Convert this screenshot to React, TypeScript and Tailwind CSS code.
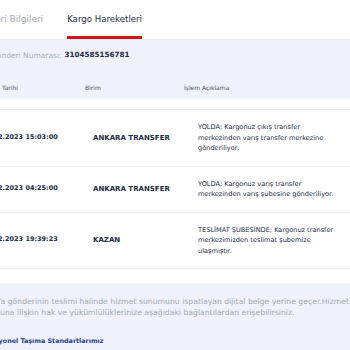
import { FunctionComponent } from "react";

interface Movement {
  date: string;
  unit: string;
  desc: string[];
}

const movements: Movement[] = [
  {
    date: "14.02.2023 15:03:00",
    unit: "ANKARA TRANSFER",
    desc: [
      "YOLDA; Kargonuz çıkış transfer",
      "merkezinden varış transfer merkezine",
      "gönderiliyor.",
    ],
  },
  {
    date: "15.02.2023 04:25:00",
    unit: "ANKARA TRANSFER",
    desc: [
      "YOLDA; Kargonuz varış transfer",
      "merkezinden varış şubesine gönderiliyor.",
    ],
  },
  {
    date: "15.02.2023 19:39:23",
    unit: "KAZAN",
    desc: [
      "TESLİMAT ŞUBESİNDE; Kargonuz transfer",
      "merkezimizden teslimat şubemize",
      "ulaşmıştır.",
    ],
  },
];

const Row: FunctionComponent<Movement> = ({ date, unit, desc }) => (
  <div className="flex items-center border-b border-[#eceef2] py-[12px]">
    <div className="w-[133px] shrink-0 pl-[22px] text-[6.5px] font-bold text-[#222b45] whitespace-nowrap">
      {date}
    </div>
    <div className="w-[105px] shrink-0 text-[7px] font-bold text-[#222b45] whitespace-nowrap">
      {unit}
    </div>
    <div className="text-[6.6px] leading-[10.5px] text-[#222b45] whitespace-nowrap">
      {desc.map((line, i) => (
        <p key={i}>{line}</p>
      ))}
    </div>
  </div>
);

export default function App() {
  return (
    <div
      className="w-[350px] h-[350px] overflow-hidden bg-white"
      style={{ fontFamily: '"DejaVu Sans", sans-serif' }}
    >
      <div className="-ml-[40px] w-[600px]">
        {/* tabs */}
        <div className="flex h-[40px] items-stretch border-b border-[#e6e8ec]">
          <div className="flex items-center pl-[11px] pr-[24px] text-[9px] text-[#a3a9b5] whitespace-nowrap">
            Gönderi Bilgileri
          </div>
          <div className="relative flex items-center text-[8.6px] font-medium text-[#222b45] whitespace-nowrap">
            Kargo Hareketleri
            <span className="absolute left-0 right-0 bottom-0 h-[3px] bg-[#d2121f]" />
          </div>
        </div>

        <div className="bg-[#eff2fa] h-[59px] flex flex-col">
          <div className="mt-[10px] flex items-center gap-[3px] pl-[31px] text-[7.5px] whitespace-nowrap">
            <span className="text-[#a9b0bd]">Gönderi Numarası:</span>
            <span className="text-[7.2px] font-bold text-[#222b45]">3104585156781</span>
          </div>
          <div className="mt-auto mb-[7px] flex text-[6px] text-[#4a5164] whitespace-nowrap">
            <div className="w-[125px] pl-[24px]">İşlem Tarihi</div>
            <div className="w-[99px]">Birim</div>
            <div>İşlem Açıklama</div>
          </div>
        </div>

        <div className="mt-[10px] border-t border-[#eceef2]">
          {movements.map((m, i) => (
            <Row key={i} {...m} />
          ))}
        </div>

        <div className="mt-[14px] bg-[#eff2fa] px-[12px] pt-[13px] pb-[20px] text-[7.7px] leading-[11px] text-[#a3a9b5] whitespace-nowrap">
          <p>Bu sayfa gönderinin teslimi halinde hizmet sunumunu ispatlayan dijital belge yerine geçer.Hizmet</p>
          <p className="pl-[2px]">sunumuna ilişkin hak ve yükümlülüklerinize aşağıdaki bağlantılardan erişebilirsiniz.</p>
          <p className="mt-[18px] pl-[1px] text-[6.4px] font-semibold text-[#2b3f8f]">Operasyonel Taşıma Standartlarımız</p>
        </div>
      </div>
    </div>
  );
}
